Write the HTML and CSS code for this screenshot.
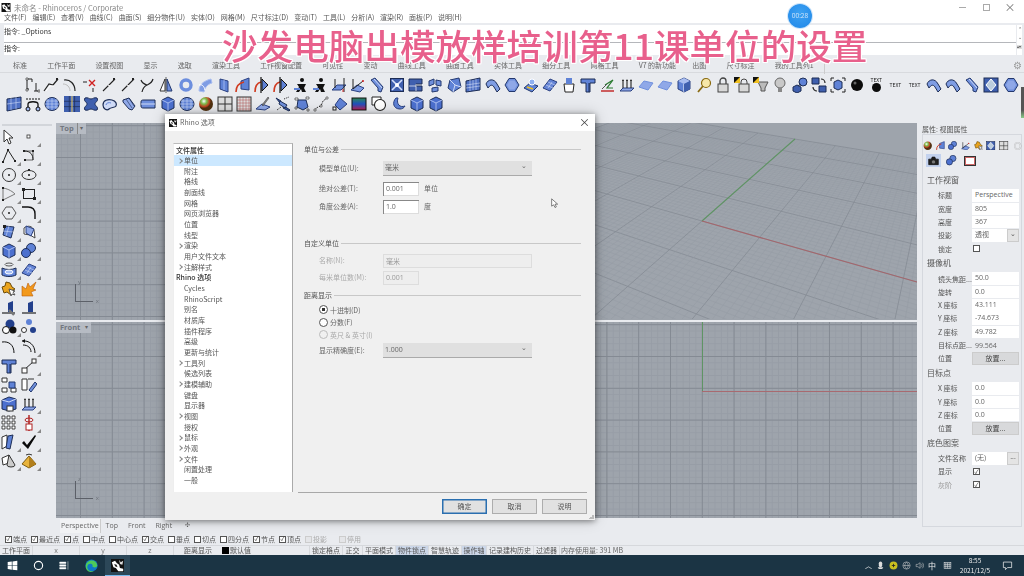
FILE: index.html
```
<!DOCTYPE html>
<html lang="zh-CN">
<head>
<meta charset="utf-8">
<title>Rhino</title>
<link rel="stylesheet" href="styles.css">
</head>
<body>
<svg class="defs" width="0" height="0">
<defs>
<symbol id="rhino" viewBox="0 0 16 16"><rect width="16" height="16" fill="#111"/><path d="M1 4l4-2 2 3 3 2 1 4 4 1v3H9L6 11 3 10z" fill="#fff"/><path d="M10 1l2 3 3-2-1 5-3-1z" fill="#ddd"/><path d="M4 6l3 1 1 3-3-1z" fill="#222"/></symbol>
<symbol id="crvT" viewBox="0 0 16 16"><path d="M3 2h5v3M3 2v10h2M10 14h5M12 6v8" fill="none" stroke="#222"/><path d="M2 1h2v2H2zM2 12h2v2H2zM14 13h2v2h-2z" fill="#fff" stroke="#222" stroke-width=".6"/></symbol>
<symbol id="blend" viewBox="0 0 16 16"><path d="M1 14l5-7 4 1 5-6" fill="none" stroke="#222" stroke-width="1.2"/><path d="M3 14l4-5 4 0" fill="none" stroke="#fff"/><rect x="13" y="1" width="2" height="2" fill="#222"/></symbol>
<symbol id="arc" viewBox="0 0 16 16"><path d="M2 3c6-1 11 4 11 11" fill="none" stroke="#222" stroke-width="1.2"/><path d="M1 7c4 0 7 3 7 7" fill="none" stroke="#bbb"/></symbol>
<symbol id="redx" viewBox="0 0 16 16"><path d="M1 5h4M11 11v4" stroke="#222" fill="none"/><path d="M7 3l6 6M13 3l-6 6" stroke="#d02020" stroke-width="1.4"/></symbol>
<symbol id="ln" viewBox="0 0 16 16"><path d="M2 14L14 2" stroke="#222" stroke-width="1.1"/><path d="M7 8l2 1" stroke="#fff"/><path d="M12 1h2v2h-2z" fill="#222"/></symbol>
<symbol id="ybr" viewBox="0 0 16 16"><path d="M3 15c1-5 3-6 5-7s5-2 6-6M2 3c1 3 3 4 6 5" fill="none" stroke="#222" stroke-width="1.2"/></symbol>
<symbol id="mir" viewBox="0 0 16 16"><path d="M7 2L2 14h5z" fill="#fff" stroke="#333"/><path d="M9 2l5 12H9z" fill="#6f8fdc" stroke="#23386e"/><path d="M8 0v16" stroke="#222" stroke-width=".7"/></symbol>
<symbol id="ring" viewBox="0 0 16 16"><circle cx="8" cy="8" r="5" fill="none" stroke="#6c8ede" stroke-width="3.4"/></symbol>
<symbol id="bcrv" viewBox="0 0 16 16"><path d="M2 14c0-6 4-10 12-12l1 4c-4 1-7 4-8 9z" fill="#7f9de4" stroke="#a9bdf0"/><path d="M2 8c3-1 5 1 6 5" fill="none" stroke="#fff"/></symbol>
<symbol id="plv" viewBox="0 0 16 16"><path d="M4 2l8 2v11l-8-3z" fill="#5f82d6" stroke="#2a4080"/><path d="M8 3v10" stroke="#9fb5ee"/></symbol>
<symbol id="rb" viewBox="0 0 16 16"><path d="M6 4l8-3v12l-8-1z" fill="#5f82d6" stroke="#2a4080"/><path d="M1 15c0-6 3-9 8-10" fill="none" stroke="#d03b20" stroke-width="1.6"/></symbol>
<symbol id="rbk" viewBox="0 0 16 16"><path d="M8 2l6 6-6 6z" fill="#5f82d6" stroke="#111"/><path d="M1 15c0-6 2-9 6-10" fill="none" stroke="#d03b20" stroke-width="1.6"/><path d="M7 0v16" stroke="#111" stroke-width="1.2"/></symbol>
<symbol id="per" viewBox="0 0 16 16"><circle cx="9" cy="3" r="2" fill="#111"/><path d="M4 7h9l-2 4 2 4H9l-1-3-2 3H3l3-5z" fill="#111"/><path d="M1 12h6" stroke="#5f82d6" stroke-width="2"/></symbol>
<symbol id="cam" viewBox="0 0 16 16"><path d="M1 6h14v8H1zM5 6l1-3h4l1 3" fill="#222" stroke="#111"/><circle cx="8" cy="10" r="2.500" fill="#777"/></symbol>
<symbol id="pld" viewBox="0 0 16 16"><path d="M1 13l5-5h9l-5 5z" fill="#6f8fdc" stroke="#2a4080"/><path d="M4 2v9M13 1v14" stroke="#222"/><path d="M12 12v3" stroke="#d02020"/></symbol>
<symbol id="pll" viewBox="0 0 16 16"><path d="M1 13l6-5 7 3-4 4z" fill="#7f9de4" stroke="#2a4080"/><path d="M3 2v10l10-8" fill="none" stroke="#222"/><circle cx="13" cy="4" r="1" fill="#d02020"/></symbol>
<symbol id="strip" viewBox="0 0 16 16"><path d="M2 3l4-2 8 9-2 5-3-1 0-3z" fill="#6f8fdc" stroke="#23386e"/><path d="M5 2l8 9" stroke="#cfdaf6"/></symbol>
<symbol id="boxx" viewBox="0 0 16 16"><rect x="1.500" y="1.500" width="13" height="13" fill="#3f5fae" stroke="#1d2d55"/><path d="M3 3l10 10M13 3L3 13" stroke="#d6e0fa" stroke-width="1.6"/><circle cx="8" cy="8" r="2" fill="#fff"/></symbol>
<symbol id="stk" viewBox="0 0 16 16"><path d="M1 2h13v5H8v2h6v5H1z" fill="#3f5fae" stroke="#1d2d55"/><path d="M8 7v7M1 9h7" stroke="#fff" stroke-width=".7"/></symbol>
<symbol id="brk" viewBox="0 0 16 16"><path d="M2 4l5-2v5l-5 2zM9 3l5 1v5l-5-1zM5 11l6-1v4l-6 1z" fill="#6f8fdc" stroke="#23386e"/></symbol>
<symbol id="cbh" viewBox="0 0 16 16"><path d="M4 3l9-2 2 9-8 5-5-4z" fill="#5f82d6" stroke="#23386e"/><path d="M4 3l5 5-2 7M9 8l6 2" stroke="#cfdaf6" fill="none"/></symbol>
<symbol id="grd" viewBox="0 0 16 16"><path d="M1 4l14-3v12L1 15z" fill="#4f70c4" stroke="#1d2d55"/><path d="M5 3v11M8 3v10M11 2v11M1 8l14-2M1 11l14-2" stroke="#cfdaf6" stroke-width=".6"/></symbol>
<symbol id="band" viewBox="0 0 16 16"><path d="M1 7c2-5 8-6 11 0l3 5-3 3-3-5C7 7 5 8 3 11z" fill="#7f9de4" stroke="#1d2d55"/></symbol>
<symbol id="hex" viewBox="0 0 16 16"><path d="M5 1.500h6L15 8l-4 6.500H5L1 8z" fill="#6f8fdc" stroke="#23386e"/><path d="M5.500 3.500h5L13 8l-2.500 4.500h-5L3 8z" fill="#8fa8e8"/></symbol>
<symbol id="gbox" viewBox="0 0 16 16"><rect x="1" y="1" width="14" height="14" fill="#3f5fae" stroke="#1d2d55"/><path d="M8 2l5 6-5 6-5-6z" fill="#bcd" stroke="#fff"/></symbol>
<symbol id="sdir" viewBox="0 0 16 16"><path d="M1 11l6-5 8 3-6 6z" fill="#5f82d6" stroke="#23386e"/><circle cx="9" cy="5" r="3" fill="#8fb0f0" stroke="#fff"/><path d="M4 10l6 2" stroke="#f0c020" stroke-width="1.6"/></symbol>
<symbol id="plt" viewBox="0 0 16 16"><path d="M1 11L8 2l7 3-7 9z" fill="#6484d6" stroke="#2a4080"/><path d="M4 8l7 3M6 5l7 3M6 11l4-6" stroke="#cfdaf6" stroke-width=".6"/></symbol>
<symbol id="buck" viewBox="0 0 16 16"><path d="M3 7h10l-1 8H4z" fill="#fff" stroke="#222"/><rect x="5" y="1" width="6" height="6" fill="#5f82d6"/></symbol>
<symbol id="tee" viewBox="0 0 16 16"><path d="M1 2h14v4h-5v9H6V6H1z" fill="#5f82d6" stroke="#1d2d55"/><path d="M9 6v9" stroke="#1d2d55"/></symbol>
<symbol id="zpl" viewBox="0 0 16 16"><path d="M5 8l8-5-6 8h6" fill="none" stroke="#2a7a30" stroke-width="1.2"/><path d="M1 14h13" stroke="#c02020" stroke-width="1.4"/><path d="M2 12l5-5" stroke="#555"/></symbol>
<symbol id="arr" viewBox="0 0 16 16"><path d="M1 14l3-3h11l-3 3z" fill="#8fa8e8" stroke="#2a4080"/><path d="M4 11V3M8 11V3M12 11V3" stroke="#222" stroke-width="1.100"/><path d="M3 4l1-2 1 2M7 4l1-2 1 2M11 4l1-2 1 2" fill="#222"/></symbol>
<symbol id="flat" viewBox="0 0 16 16"><path d="M1 10l5-6 9 2-5 7z" fill="#8fa8e8" stroke="#6f8fdc"/></symbol>
<symbol id="cube" viewBox="0 0 16 16"><path d="M2 4l6-3 6 3v8l-6 3-6-3z" fill="#5f82d6" stroke="#2a4080"/><path d="M2 4l6 3 6-3-6-3z" fill="#a9bdf0"/><path d="M8 7v8" stroke="#fff"/><path d="M8 7l6-3v8l-6 3z" fill="#3f5fae"/></symbol>
<symbol id="mag" viewBox="0 0 16 16"><circle cx="10" cy="6" r="4.500" fill="#f7e7a8" stroke="#8a6a10" stroke-width="1.200"/><path d="M7 9l-5 6" stroke="#8a6a10" stroke-width="1.800"/></symbol>
<symbol id="lock" viewBox="0 0 16 16"><path d="M5 7V4a3 3 0 016 0v3" fill="none" stroke="#444" stroke-width="1.300"/><rect x="3" y="7" width="10" height="8" fill="#d8d8d8" stroke="#444"/></symbol>
<symbol id="lockc" viewBox="0 0 16 16"><path d="M7 7V5a3 3 0 016 0v2" fill="none" stroke="#444"/><rect x="5" y="7" width="10" height="8" fill="#d8d8d8" stroke="#444"/><path d="M0 0h6v6H0z" fill="#111"/><path d="M0 6l6-6v6z" fill="#f0c020"/></symbol>
<symbol id="bulbc" viewBox="0 0 16 16"><path d="M5 5h10l-3 6v3H8v-3z" fill="#bbb" stroke="#555"/><path d="M0 0h6v6H0z" fill="#111"/><path d="M0 6l6-6v6z" fill="#f0c020"/></symbol>
<symbol id="bulb" viewBox="0 0 16 16"><circle cx="8" cy="6" r="5" fill="#c8c8c8" stroke="#666"/><rect x="6" y="11" width="4" height="4" fill="#888"/></symbol>
<symbol id="spb" viewBox="0 0 16 16"><circle cx="11" cy="5" r="4" fill="#5f82d6" stroke="#1d2d55"/><path d="M1 10l4-2 4 2v4l-4 2-4-2z" fill="#3f5fae" stroke="#1d2d55"/><path d="M6 9l3-2" stroke="#1d2d55"/></symbol>
<symbol id="cbs" viewBox="0 0 16 16"><path d="M1 1h7v6H1zM8 9h7v6H8z" fill="#3f5fae" stroke="#1d2d55"/><path d="M10 2a4 4 0 014 4M6 14a4 4 0 01-4-4" fill="none" stroke="#222" stroke-width="1.200"/></symbol>
<symbol id="cbd" viewBox="0 0 16 16"><path d="M4 5l4-2 4 2v6l-4 2-4-2z" fill="#5f82d6" stroke="#1d2d55"/><path d="M1 1h3M12 1h3M1 15h3M12 15h3M1 1v3M15 1v3M1 12v3M15 12v3" stroke="#222"/></symbol>
<symbol id="blk" viewBox="0 0 16 16"><circle cx="8" cy="8" r="6" fill="#0c0c0c"/><circle cx="6" cy="6" r="1.500" fill="#666"/></symbol>
<symbol id="sel" viewBox="0 0 16 16"><path d="M3 1v12l3-3 2 5 2-1-2-5h4z" fill="#fff" stroke="#333"/></symbol>
<symbol id="pt" viewBox="0 0 16 16"><rect x="6" y="6" width="3" height="3" fill="#fff" stroke="#333" stroke-width=".8"/></symbol>
<symbol id="pln" viewBox="0 0 16 16"><path d="M2 14L7 2l7 11" fill="none" stroke="#222"/><path d="M1 13h2v2H1zM6 1h2v2H6zM13 12h2v2h-2z" fill="#222"/></symbol>
<symbol id="ccp" viewBox="0 0 16 16"><path d="M3 3h9v9H4" fill="none" stroke="#444" stroke-width=".8"/><path d="M3 3c7 0 9 4 9 9" fill="none" stroke="#222"/><path d="M2 2h2v2H2zM11 2h2v2h-2zM3 11h2v2H3z" fill="#222"/></symbol>
<symbol id="cir" viewBox="0 0 16 16"><circle cx="8" cy="8" r="6.500" fill="none" stroke="#333"/><circle cx="8" cy="8" r="1" fill="#222"/></symbol>
<symbol id="ell" viewBox="0 0 16 16"><ellipse cx="8" cy="8" rx="7" ry="4.500" fill="none" stroke="#333"/><circle cx="8" cy="8" r="1" fill="#222"/><path d="M7 2h2v2H7z" fill="#222"/></symbol>
<symbol id="tri" viewBox="0 0 16 16"><path d="M2 2c6 1 10 4 12 6L2 14z" fill="none" stroke="#777"/><path d="M1 1h2v2H1zM1 13h2v2H1z" fill="#222"/></symbol>
<symbol id="rec" viewBox="0 0 16 16"><rect x="2.500" y="3.500" width="11" height="9" fill="none" stroke="#222"/><path d="M1 2h3v3H1zM12 11h3v3h-3z" fill="#222"/></symbol>
<symbol id="hxc" viewBox="0 0 16 16"><path d="M5 2h6l4 6-4 6H5L1 8z" fill="none" stroke="#555"/><circle cx="8" cy="8" r="1" fill="#222"/></symbol>
<symbol id="fil" viewBox="0 0 16 16"><path d="M1 2h6c5 0 7 3 7 7v5" fill="none" stroke="#111" stroke-width="1.400"/></symbol>
<symbol id="srf" viewBox="0 0 16 16"><path d="M4 2l9 1-3 11-8-3z" fill="#5f82d6" stroke="#1d2d55"/><path d="M8 2l-3 10M2 7l10 1" stroke="#cfdaf6" stroke-width=".6"/><path d="M2 1h3v3H2z" fill="#222"/></symbol>
<symbol id="pat" viewBox="0 0 16 16"><path d="M3 4c4-3 8-2 10 2l1 8-5-3-6-1z" fill="#fff" stroke="#444"/><path d="M5 2l8 3-3 7-5-3z" fill="#8fa8e8" stroke="#2a4080"/></symbol>
<symbol id="cb2" viewBox="0 0 16 16"><path d="M2 4l6-3 6 3v8l-6 3-6-3z" fill="#4c70cf" stroke="#1d2d55"/><path d="M2 4l6 3 6-3" fill="none" stroke="#a9bdf0"/><path d="M8 7v8" stroke="#a9bdf0"/></symbol>
<symbol id="sph2" viewBox="0 0 16 16"><circle cx="10" cy="5" r="4.500" fill="#5f82d6" stroke="#1d2d55"/><circle cx="5" cy="10" r="4.500" fill="#4c70cf" stroke="#1d2d55"/></symbol>
<symbol id="cyl" viewBox="0 0 16 16"><ellipse cx="8" cy="2.500" rx="4" ry="1.500" fill="none" stroke="#555"/><path d="M1 6c4 2 10 2 14 0v7c-4 2-10 2-14 0z" fill="#5f82d6" stroke="#1d2d55"/><ellipse cx="8" cy="10" rx="4" ry="2" fill="#a9c0f4" stroke="#fff"/></symbol>
<symbol id="star" viewBox="0 0 16 16"><path d="M1 6l3-1 1-4 4 1 2 4 3 2-4 2v4l-4-3-3 1z" fill="#eaa41e" stroke="#6b4a08"/><path d="M8 8l2 7 1-2 3 1-2-3 2-1z" fill="#fff" stroke="#555"/></symbol>
<symbol id="exp" viewBox="0 0 16 16"><path d="M1 15V5l4 3 2-6 2 4 6-5-3 7 3 1-5 2 2 4z" fill="#f2991c" stroke="#b85a08" stroke-width=".6"/></symbol>
<symbol id="trm" viewBox="0 0 16 16"><path d="M1 13h13" stroke="#222" stroke-width="1.200"/><path d="M7 12V3l5-2v11z" fill="#23408c"/><path d="M8 10l5 5" stroke="#777" stroke-width="2.400"/></symbol>
<symbol id="trm2" viewBox="0 0 16 16"><path d="M1 13h14" stroke="#222" stroke-width="1.200"/><path d="M7 12V3l5-2v11z" fill="#23408c"/></symbol>
<symbol id="dk3" viewBox="0 0 16 16"><circle cx="9" cy="5" r="4.500" fill="#23408c"/><circle cx="5" cy="11" r="3.500" fill="#fff" stroke="#111"/><circle cx="12" cy="11" r="3.500" fill="#111"/></symbol>
<symbol id="dots" viewBox="0 0 16 16"><circle cx="8" cy="3" r="3" fill="#5f82d6"/><circle cx="3" cy="11" r="2.500" fill="#fff" stroke="#333"/><circle cx="12" cy="11" r="3" fill="#23408c"/></symbol>
<symbol id="arc2" viewBox="0 0 16 16"><path d="M1 3c7-1 12 3 12 11" fill="none" stroke="#111"/></symbol>
<symbol id="arc3" viewBox="0 0 16 16"><path d="M1 2c7-1 13 4 13 12M2 6c5 0 8 3 8 7" fill="none" stroke="#111"/><path d="M1 2l3-2v4z" fill="#111"/></symbol>
<symbol id="pq" viewBox="0 0 16 16"><path d="M3 12l10-9" stroke="#222"/><rect x="1" y="10" width="5" height="5" fill="#fff" stroke="#333"/><rect x="11" y="1" width="4" height="4" fill="#fff" stroke="#333"/></symbol>
<symbol id="sqs" viewBox="0 0 16 16"><path d="M1 1h5v4H1zM1 11h5v4H1zM10 11h5v4h-5z" fill="#fff" stroke="#333"/><path d="M8 5h6v6H8z" fill="#5f82d6" stroke="#23386e"/></symbol>
<symbol id="flip" viewBox="0 0 16 16"><path d="M1 2h5v11H1z" fill="#fff" stroke="#333"/><path d="M8 13l6-8 2 2-6 8z" fill="#6f8fdc" stroke="#23386e"/><path d="M7 2h6" stroke="#333"/></symbol>
<symbol id="bxw" viewBox="0 0 16 16"><path d="M1 4l7-3 7 2v10l-7 2-7-2z" fill="#4c70cf" stroke="#1d2d55"/><path d="M1 4l7 2 7-3" fill="none" stroke="#cfdaf6"/><rect x="6" y="10" width="6" height="5" fill="#fff" stroke="#333"/></symbol>
<symbol id="dgrid" viewBox="0 0 16 16"><path d="M1 1h3v3H1zM6 1h3v3H6zM11 1h3v3h-3zM1 6h3v3H1zM6 6h3v3H6zM11 6h3v3h-3zM1 11h3v3H1zM6 11h3v3H6zM11 11h3v3h-3z" fill="#fff" stroke="#222" stroke-width=".8"/></symbol>
<symbol id="slc" viewBox="0 0 16 16"><path d="M8 0v16" stroke="#b02020" stroke-width="1.400"/><ellipse cx="8" cy="5" rx="4" ry="2" fill="none" stroke="#b02020"/><rect x="5" y="9" width="6" height="6" fill="#fff" stroke="#b02020"/></symbol>
<symbol id="bks" viewBox="0 0 16 16"><path d="M1 3l5-2v11l-5 3z" fill="#fff" stroke="#333"/><path d="M7 2l5-1-3 14-4-1z" fill="#5f82d6" stroke="#1d2d55"/></symbol>
<symbol id="chk" viewBox="0 0 16 16"><path d="M1 9l2-2 3 4 8-10 1 1-8 13z" fill="#0a0a0a"/></symbol>
<symbol id="cone" viewBox="0 0 16 16"><path d="M1 5l7-3v8l-6 2z" fill="#fff" stroke="#333"/><path d="M8 2l6 10a4 2 0 01-8 0z" fill="#ccc" stroke="#333"/></symbol>
<symbol id="pyr" viewBox="0 0 16 16"><path d="M8 3l7 8-7 4-7-4z" fill="#e8b33c" stroke="#7a5a10"/><path d="M8 3v12l7-4z" fill="#b27f1c"/><path d="M5 2a4 2 0 016 0" fill="none" stroke="#333"/></symbol>
<symbol id="mesh" viewBox="0 0 16 16"><path d="M1 3l14-2v11L1 15z" fill="#4f70c4" stroke="#1d2d55"/><path d="M1 8l14-2M5 2v12M10 1v12" stroke="#cfdaf6" stroke-width=".6"/></symbol>
<symbol id="tube" viewBox="0 0 16 16"><path d="M3 13V8c0-3 10-3 10 0v5" fill="none" stroke="#111" stroke-width="1.300"/><path d="M1 3h14" stroke="#111" stroke-dasharray="2 1"/><ellipse cx="3" cy="13" rx="2" ry="2" fill="#9fb5ee" stroke="#111"/><ellipse cx="13" cy="13" rx="2" ry="2" fill="#9fb5ee" stroke="#111"/></symbol>
<symbol id="sgrd" viewBox="0 0 16 16"><ellipse cx="8" cy="8" rx="7" ry="6.500" fill="#5f82d6" stroke="#1d2d55"/><path d="M8 2v12M4 3v10M12 3v10M1 8h14M2 5h12M2 11h12" stroke="#cfdaf6" stroke-width=".6"/></symbol>
<symbol id="yg" viewBox="0 0 16 16"><rect x="0" y="0" width="16" height="16" fill="#3f5fae"/><path d="M0 5.300h16M0 10.600h16M5.300 0v16M10.600 0v16" stroke="#1d2d55" stroke-width=".7"/><path d="M8 0v16" stroke="#f0d060"/></symbol>
<symbol id="bone" viewBox="0 0 16 16"><path d="M2 2c3-1 4 1 6 1s3-2 6-1c2 3-2 4-2 6s4 3 2 6c-3 1-4-1-6-1s-3 2-6 1c-2-3 2-4 2-6S0 5 2 2z" fill="#3f5fae" stroke="#1d2d55"/></symbol>
<symbol id="blob" viewBox="0 0 16 16"><path d="M1 9c0-5 5-6 9-5s5 4 4 6-5 1-7 3-6 0-6-4z" fill="#cfdaf6" stroke="#1d2d55" stroke-width="1.200"/><path d="M4 9c0-2 3-3 5-2" fill="none" stroke="#5f82d6"/></symbol>
<symbol id="rnd" viewBox="0 0 16 16"><path d="M2 4l6-2 6 8-3 4-3-1-6-7z" fill="#8fa8e8" stroke="#1d2d55"/><path d="M5 3l6 9M8 2l5 8" stroke="#1d2d55" stroke-width=".6"/></symbol>
<symbol id="cap" viewBox="0 0 16 16"><path d="M1 6c0-2 1-2 3-2h11v8H4c-2 0-3 0-3-2z" fill="#6f8fdc" stroke="#1d2d55"/><path d="M1 8h14" stroke="#cfdaf6"/></symbol>
<symbol id="ball" viewBox="0 0 16 16"><defs><radialGradient id="bg" cx=".35" cy=".3"><stop offset="0" stop-color="#fff"/><stop offset=".4" stop-color="#7fc050"/><stop offset=".8" stop-color="#c04020"/><stop offset="1" stop-color="#503010"/></radialGradient></defs><circle cx="8" cy="8" r="7" fill="url(#bg)"/></symbol>
<symbol id="q4" viewBox="0 0 16 16"><rect x="1" y="1" width="14" height="14" fill="#ddd" stroke="#333"/><path d="M8 1v14M1 8h14" stroke="#333"/></symbol>
<symbol id="q16" viewBox="0 0 16 16"><rect x="1" y="1" width="14" height="14" fill="#ddd" stroke="#333"/><path d="M4 1v14M7 1v14M10 1v14M13 1v14M1 4h14M1 7h14M1 10h14M1 13h14" stroke="#a33" stroke-width=".4"/></symbol>
<symbol id="knf" viewBox="0 0 16 16"><path d="M1 13l6-5 8 3-5 3z" fill="#8fa8e8" stroke="#2a4080"/><path d="M7 9l6-8 1 1-6 8z" fill="#888" stroke="#333" stroke-width=".5"/></symbol>
<symbol id="sat" viewBox="0 0 16 16"><path d="M1 2l5 3-1 2zM9 10l6 4-1 1-6-3z" fill="#3f5fae" stroke="#1d2d55"/><path d="M5 5l7 4-2 3-6-4z" fill="#6f8fdc" stroke="#1d2d55"/><path d="M9 3l5-2M2 14l4-3" stroke="#222" stroke-dasharray="1 1"/></symbol>
<symbol id="cag" viewBox="0 0 16 16"><path d="M4 4l8 0 2 7-5 3-6-3z" fill="#5f82d6" stroke="#1d2d55"/><path d="M1 2h3v2H1zM12 1h3v2h-3zM1 11h2v2H1zM13 13h2v2h-2z" fill="#fff" stroke="#222" stroke-width=".6"/></symbol>
<symbol id="spl" viewBox="0 0 16 16"><path d="M1 14l4-3 3-1 2-5 4-3" fill="none" stroke="#333" stroke-dasharray="2 1"/><path d="M1 13h2v2H1zM7 9h2v2H7zM13 1h2v2h-2z" fill="#fff" stroke="#333" stroke-width=".6"/></symbol>
<symbol id="dia" viewBox="0 0 16 16"><path d="M8 2l7 6-7 6-5-5z" fill="#5f82d6" stroke="#2a4080"/><rect x="1" y="11" width="3" height="3" fill="#fff" stroke="#222"/></symbol>
<symbol id="rbw" viewBox="0 0 16 16"><defs><linearGradient id="rg" x1="0" x2="0" y1="0" y2="1"><stop offset="0" stop-color="#2e8b57"/><stop offset=".5" stop-color="#2050c0"/><stop offset="1" stop-color="#c02050"/></linearGradient></defs><rect x="1" y="2" width="14" height="12" fill="url(#rg)" stroke="#111"/></symbol>
<symbol id="rc" viewBox="0 0 16 16"><path d="M1 1h9v8H1z" fill="#fff" stroke="#222"/><circle cx="9" cy="9" r="5.500" fill="#fff" stroke="#222" stroke-width="1.100"/></symbol>
<symbol id="moon" viewBox="0 0 16 16"><path d="M6 2c-4 4-3 11 4 11 2 0 4-1 5-3-5 2-9-2-7-8z" fill="#5f82d6" stroke="#2a4080"/></symbol>
</defs>
</svg>

<div class="app">
  <header class="titlebar">
    <svg class="logo"><use href="#rhino"/></svg>
    <span class="apptitle">未命名 - Rhinoceros / Corporate</span>
    <span class="winctl"><i class="wmin"></i><i class="wmax"></i><i class="wcls">×</i></span>
  </header>
  <nav class="menu">
    <span>文件(F)</span><span>编辑(E)</span><span>查看(V)</span><span>曲线(C)</span><span>曲面(S)</span><span>细分物件(U)</span><span>实体(O)</span><span>网格(M)</span><span>尺寸标注(D)</span><span>变动(T)</span><span>工具(L)</span><span>分析(A)</span><span>渲染(R)</span><span>面板(P)</span><span>说明(H)</span>
  </nav>
  <section class="cmd">
    <div class="cmdbox">
      <div class="cmdhist">指令: _Options</div>
      <div class="cmdline">指令:</div>
    </div>
    <div class="cmdscroll"><span>⌃</span><span>⌄</span><span class="cs2">▴▾</span></div>
  </section>
  <nav class="tabs">
    <span>标准</span><span>工作平面</span><span>设置视图</span><span>显示</span><span>选取</span><span>渲染工具</span><span>工作视窗配置</span><span>可见性</span><span>变动</span><span>曲线工具</span><span>曲面工具</span><span>实体工具</span><span>细分工具</span><span>网格工具</span><span class="v7">V7 的新功能</span><span>出图</span><span>尺寸标注</span><span class="mytab">我的工具列1</span>
    <span class="gear">⚙</span>
  </nav>
  <section class="tools">
    <div class="row r1">
      <svg><use href="#crvT"/></svg><svg><use href="#blend"/></svg><svg><use href="#arc"/></svg><svg><use href="#redx"/></svg><svg><use href="#ln"/></svg><svg><use href="#ln"/></svg><svg><use href="#ybr"/></svg><svg><use href="#mir"/></svg><svg><use href="#ring"/></svg><svg><use href="#bcrv"/></svg><svg><use href="#plv"/></svg><svg><use href="#rb"/></svg><svg><use href="#rbk"/></svg><svg><use href="#rbk"/></svg><svg><use href="#per"/></svg><svg><use href="#per"/></svg><svg><use href="#pld"/></svg><svg><use href="#pll"/></svg><svg><use href="#strip"/></svg><svg><use href="#boxx"/></svg><svg><use href="#stk"/></svg><svg><use href="#brk"/></svg><svg><use href="#cbh"/></svg><svg><use href="#grd"/></svg><svg><use href="#band"/></svg><svg><use href="#hex"/></svg><svg><use href="#sdir"/></svg><svg><use href="#plt"/></svg><svg><use href="#buck"/></svg><svg><use href="#tee"/></svg><svg><use href="#zpl"/></svg><svg><use href="#arr"/></svg><svg><use href="#flat"/></svg><svg><use href="#flat"/></svg><svg><use href="#cube"/></svg><svg><use href="#mag"/></svg><svg><use href="#lock"/></svg><svg><use href="#lockc"/></svg><svg><use href="#bulbc"/></svg><svg><use href="#bulb"/></svg><svg><use href="#spb"/></svg><svg><use href="#cbs"/></svg><svg><use href="#cbd"/></svg><svg><use href="#blk"/></svg>
      <b class="txi">TEXT<i></i></b><b class="txt">TEXT</b><b class="txt">TEXT</b>
      <svg><use href="#band"/></svg><svg><use href="#band"/></svg><svg><use href="#strip"/></svg><svg><use href="#gbox"/></svg><svg><use href="#hex"/></svg>
    </div>
    <div class="row r2">
      <svg><use href="#mesh"/></svg><svg><use href="#tube"/></svg><svg><use href="#sgrd"/></svg><svg><use href="#yg"/></svg><svg><use href="#bone"/></svg><svg><use href="#blob"/></svg><svg><use href="#rnd"/></svg><svg><use href="#cap"/></svg><svg><use href="#cb2"/></svg><svg><use href="#sgrd"/></svg><svg><use href="#ball"/></svg><svg><use href="#q4"/></svg><svg><use href="#q16"/></svg><svg><use href="#knf"/></svg><svg><use href="#sat"/></svg><svg><use href="#cag"/></svg><svg><use href="#spl"/></svg><svg><use href="#dia"/></svg><svg><use href="#rbw"/></svg><svg><use href="#rc"/></svg><svg><use href="#moon"/></svg><svg><use href="#cb2"/></svg><svg><use href="#cb2"/></svg>
    </div>
    <i class="tscroll"></i>
  </section>

  <main class="work">
    <aside class="lbar">
      <i class="lsep"></i>
      <div class="lgrid">
        <span class="ic"><svg><use href="#sel"/></svg></span><span class="ic c"><svg><use href="#pt"/></svg></span>
        <span class="ic c"><svg><use href="#pln"/></svg></span><span class="ic c"><svg><use href="#ccp"/></svg></span>
        <span class="ic c"><svg><use href="#cir"/></svg></span><span class="ic c"><svg><use href="#ell"/></svg></span>
        <span class="ic c"><svg><use href="#tri"/></svg></span><span class="ic c"><svg><use href="#rec"/></svg></span>
        <span class="ic c"><svg><use href="#hxc"/></svg></span><span class="ic c"><svg><use href="#fil"/></svg></span>
        <span class="ic c"><svg><use href="#srf"/></svg></span><span class="ic c"><svg><use href="#pat"/></svg></span>
        <span class="ic c"><svg><use href="#cb2"/></svg></span><span class="ic c"><svg><use href="#sph2"/></svg></span>
        <span class="ic c"><svg><use href="#cyl"/></svg></span><span class="ic c"><svg><use href="#plt"/></svg></span>
        <span class="ic"><svg><use href="#star"/></svg></span><span class="ic"><svg><use href="#exp"/></svg></span>
        <span class="ic"><svg><use href="#trm"/></svg></span><span class="ic"><svg><use href="#trm2"/></svg></span>
        <span class="ic c"><svg><use href="#dk3"/></svg></span><span class="ic"><svg><use href="#dots"/></svg></span>
        <span class="ic"><svg><use href="#arc2"/></svg></span><span class="ic c"><svg><use href="#arc3"/></svg></span>
        <span class="ic"><svg><use href="#tee"/></svg></span><span class="ic c"><svg><use href="#pq"/></svg></span>
        <span class="ic"><svg><use href="#sqs"/></svg></span><span class="ic"><svg><use href="#flip"/></svg></span>
        <span class="ic"><svg><use href="#bxw"/></svg></span><span class="ic c"><svg><use href="#arr"/></svg></span>
        <span class="ic"><svg><use href="#dgrid"/></svg></span><span class="ic c"><svg><use href="#slc"/></svg></span>
        <span class="ic c"><svg><use href="#bks"/></svg></span><span class="ic c"><svg><use href="#chk"/></svg></span>
        <span class="ic c"><svg><use href="#cone"/></svg></span><span class="ic c"><svg><use href="#pyr"/></svg></span>
      </div>
    </aside>

    <section class="center">
      <div class="vps">
        <div class="vp vp-top">
          <span class="vplabel">Top <em>▾</em></span>
          <span class="axis"><i class="ay">y</i><i class="ax">x</i></span>
        </div>
        <div class="vp vp-persp"><svg id="persp" viewBox="0 0 430 196" preserveAspectRatio="none"></svg></div>
        <div class="vp vp-front">
          <span class="vplabel">Front <em>▾</em></span>
          <span class="axis"><i class="ay">z</i><i class="ax">x</i></span>
        </div>
        <div class="vp vp-right"><i class="gline"></i><i class="rline"></i></div>
      </div>
      <div class="vptabs">
        <span class="vpt on">Perspective</span><span class="vpt">Top</span><span class="vpt">Front</span><span class="vpt">Right</span><span class="vpt plus">✣</span>
      </div>
    </section>

    <aside class="props">
      <div class="ptitle">属性: 视图属性</div>
      <div class="pbox">
        <div class="ptabs">
          <svg><use href="#ball"/></svg><svg><use href="#rb"/></svg><svg><use href="#sph2"/></svg><svg><use href="#pll"/></svg><svg><use href="#star"/></svg><svg><use href="#gbox"/></svg><svg class="mon"><use href="#q4"/></svg><em>◎</em>
        </div>
        <div class="psub">
          <span class="on"><svg><use href="#cam"/></svg></span><span><svg><use href="#sph2"/></svg></span><span><i class="pframe"></i></span>
        </div>
        <h4>工作视窗</h4>
        <div class="pr"><label>标题</label><span class="v">Perspective</span></div>
        <div class="pr"><label>宽度</label><span class="v">805</span></div>
        <div class="pr"><label>高度</label><span class="v">367</span></div>
        <div class="pr"><label>投影</label><span class="v sel">透视<b>⌄</b></span></div>
        <div class="pr"><label>锁定</label><span class="n"><i class="ck"></i></span></div>
        <h4>摄像机</h4>
        <div class="pr"><label>镜头焦距...</label><span class="v">50.0</span></div>
        <div class="pr"><label>旋转</label><span class="v">0.0</span></div>
        <div class="pr"><label>X 座标</label><span class="v">43.111</span></div>
        <div class="pr"><label>Y 座标</label><span class="v">-74.673</span></div>
        <div class="pr"><label>Z 座标</label><span class="v">49.782</span></div>
        <div class="pr"><label>目标点距...</label><span class="n tv">99.564</span></div>
        <div class="pr"><label>位置</label><span class="btn">放置...</span></div>
        <h4>目标点</h4>
        <div class="pr"><label>X 座标</label><span class="v">0.0</span></div>
        <div class="pr"><label>Y 座标</label><span class="v">0.0</span></div>
        <div class="pr"><label>Z 座标</label><span class="v">0.0</span></div>
        <div class="pr"><label>位置</label><span class="btn">放置...</span></div>
        <h4>底色图案</h4>
        <div class="pr"><label>文件名称</label><span class="v sel">(无)<b>...</b></span></div>
        <div class="pr"><label>显示</label><span class="n"><i class="ck on">✓</i></span></div>
        <div class="pr"><label class="dim">灰阶</label><span class="n"><i class="ck on">✓</i></span></div>
      </div>
    </aside>
  </main>

  <section class="osnap">
    <label><i class="ck on">✓</i>端点</label><label><i class="ck on">✓</i>最近点</label><label><i class="ck on">✓</i>点</label><label><i class="ck"></i>中点</label><label><i class="ck"></i>中心点</label><label><i class="ck on">✓</i>交点</label><label><i class="ck"></i>垂点</label><label><i class="ck"></i>切点</label><label><i class="ck"></i>四分点</label><label><i class="ck on">✓</i>节点</label><label><i class="ck on">✓</i>顶点</label><label class="off"><i class="ck"></i>投影</label><label class="off s"><i class="ck"></i>停用</label>
  </section>
  <footer class="status">
    <span class="s1">工作平面</span><span class="s2">x</span><span class="s2">y</span><span class="s2">z</span><span class="s3">距离显示</span><span class="s4"><i></i>默认值</span>
    <span class="s5">锁定格点</span><span class="s6">正交</span><span class="s5">平面模式</span><span class="s5 hi">物件锁点</span><span class="s5">智慧轨迹</span><span class="s7 hi">操作轴</span><span class="s8">记录建构历史</span><span class="s9">过滤器</span><span class="s10">内存使用量: 391 MB</span>
  </footer>
  <footer class="taskbar">
    <svg class="tb win" viewBox="0 0 16 16"><path d="M1 3l6-1v5.500H1zM8 2l7-1v6.500H8zM1 8.500h6V14l-6-1zM8 8.500h7V15l-7-1z" fill="#fff"/></svg>
    <svg class="tb sr" viewBox="0 0 16 16"><circle cx="8" cy="8" r="6" fill="none" stroke="#fff" stroke-width="1.600"/></svg>
    <svg class="tb tv" viewBox="0 0 16 16"><path d="M1 3h9v2H1zM1 7h9v2H1zM1 11h9v2H1zM13 2v12" fill="#fff" stroke="#fff" stroke-width=".7"/></svg>
    <svg class="tb ed" viewBox="0 0 16 16"><circle cx="8" cy="8" r="7.500" fill="#0f78c8"/><path d="M1 8c1-7 13-9 14 0 0 3-5 3-6 1 2-3-5-5-6 0-1 4 3 7 8 6-5 3-11-1-10-7z" fill="#4ecb5a"/></svg>
    <span class="tb active"><svg><use href="#rhino"/></svg></span>
    <div class="tray">
      <span class="tri1">︿</span>
      <svg viewBox="0 0 16 16"><rect x="5" y="1" width="6" height="10" rx="3" fill="#ddd"/><path d="M3 11h10l-2 3H5z" fill="#ddd"/></svg>
      <svg viewBox="0 0 16 16"><circle cx="8" cy="8" r="7" fill="#c8c020"/><path d="M5 8h6M8 5v6" stroke="#222" stroke-width="1.500"/></svg>
      <svg viewBox="0 0 16 16"><circle cx="8" cy="8" r="6.500" fill="none" stroke="#ccc"/><path d="M2 8h12M8 2c-4 4-4 8 0 12M8 2c4 4 4 8 0 12" fill="none" stroke="#ccc"/></svg>
      <svg viewBox="0 0 16 16"><path d="M2 6h3l4-3v10l-4-3H2z" fill="none" stroke="#ccc"/><path d="M11 5c2 2 2 4 0 6M13 3c3 3 3 7 0 10" fill="none" stroke="#ccc"/></svg>
      <span class="zh">中</span>
      <svg viewBox="0 0 16 16"><rect x="2" y="3" width="12" height="10" fill="none" stroke="#eee"/><path d="M5 3v10M8 3v10M11 3v10M2 6h12M2 9.500h12" stroke="#eee"/></svg>
      <span class="clock">8:55<br>2021/12/5</span>
      <svg class="note" viewBox="0 0 16 16"><path d="M2 3h12v8H8l-3 3v-3H2z" fill="none" stroke="#eee" stroke-width="1.100"/></svg>
    </div>
  </footer>

  <div class="overlay-title">沙发电脑出模放样培训第11课单位的设置</div>
  <div class="timer">00:28</div>

  <div class="dialog">
    <div class="dtitle"><svg><use href="#rhino"/></svg><span>Rhino 选项</span><em>×</em></div>
    <div class="dbody">
      <div class="tree">
        <div class="t h">文件属性</div>
        <div class="t sel a">单位</div>
        <div class="t">附注</div>
        <div class="t">格线</div>
        <div class="t">剖面线</div>
        <div class="t">网格</div>
        <div class="t">网页浏览器</div>
        <div class="t">位置</div>
        <div class="t">线型</div>
        <div class="t a">渲染</div>
        <div class="t">用户文件文本</div>
        <div class="t a">注解样式</div>
        <div class="t h">Rhino 选项</div>
        <div class="t">Cycles</div>
        <div class="t">RhinoScript</div>
        <div class="t">别名</div>
        <div class="t">材质库</div>
        <div class="t">插件程序</div>
        <div class="t">高级</div>
        <div class="t">更新与统计</div>
        <div class="t a">工具列</div>
        <div class="t">候选列表</div>
        <div class="t a">建模辅助</div>
        <div class="t">键盘</div>
        <div class="t">显示器</div>
        <div class="t a">视图</div>
        <div class="t">授权</div>
        <div class="t a">鼠标</div>
        <div class="t a">外观</div>
        <div class="t a">文件</div>
        <div class="t">闲置处理</div>
        <div class="t">一般</div>
      </div>
      <div class="pane">
        <div class="grp g1">单位与公差</div>
        <div class="f f-sel"><label>模型单位(U):</label><span class="select">毫米<b>⌄</b></span></div>
        <div class="f f-1"><label>绝对公差(T):</label><span class="inp">0.001</span><span class="u">单位</span></div>
        <div class="f f-2"><label>角度公差(A):</label><span class="inp">1.0</span><span class="u">度</span></div>
        <div class="grp g2">自定义单位</div>
        <div class="f f-3 dis"><label>名称(N):</label><span class="inp wide">毫米</span></div>
        <div class="f f-4 dis"><label>每米单位数(M):</label><span class="inp">0.001</span></div>
        <div class="grp g3">距离显示</div>
        <div class="radio on">十进制(D)</div>
        <div class="radio">分数(F)</div>
        <div class="radio dis">英尺 &amp; 英寸(I)</div>
        <div class="f f-5"><label>显示精确度(E):</label><span class="select">1.000<b>⌄</b></span></div>
      </div>
    </div>
    <div class="dfoot"><span class="dbtn def">确定</span><span class="dbtn">取消</span><span class="dbtn">说明</span></div>
    <i class="grip"></i>
    <svg class="cursor" viewBox="0 0 12 16"><path d="M1 1v11l3-2 2 4 2-1-2-4h4z" fill="#fff" stroke="#444"/></svg>
  </div>
</div>
<script src="grid.js"></script>
</body>
</html>
```
FILE: styles.css
```
*{box-sizing:border-box;margin:0;padding:0}
html,body{width:1024px;height:576px;overflow:hidden;background:#e9ebef}
body{font:7px/1.2 "Noto Sans CJK SC","Noto Sans",sans-serif;color:#444}
i,em{font-style:normal}
.defs{position:absolute}
.app{position:relative;width:1024px;height:576px;display:flex;flex-direction:column;filter:blur(.35px);overflow:hidden}

.titlebar{height:13px;background:#fff;display:flex;align-items:center;padding:1px 2px 0 1px;color:#888;flex:none}
.logo{width:10px;height:9px}
.apptitle{margin-left:3px;font-size:7.500px}
.winctl{margin-left:auto;display:flex;width:72px;align-items:center;color:#777}
.winctl i{width:24px;display:flex;justify-content:center}
.wmin::before{content:"";width:7px;height:1px;background:#aaa}
.wmax::before{content:"";width:5px;height:5px;border:1px solid #aaa}
.wcls{font-size:11px;line-height:8px}
.menu{height:10px;background:#fff;display:flex;gap:5.800px;padding-left:4px;line-height:9px;color:#555;flex:none}

.cmd{height:33px;padding:2px 2px 1px 4px;display:flex;flex:none;gap:1px}
.cmdbox{flex:1;background:#fff;display:flex;flex-direction:column}
.cmdhist{height:18px;padding-top:2px;border-bottom:1px solid #b5b7bb;color:#333}
.cmdline{padding-top:1px;color:#222}
.cmdscroll{width:5px;background:#fff;display:flex;flex-direction:column;align-items:center;font-size:5px;line-height:8px;color:#555}
.cs2{margin-top:4px;width:5px;line-height:3.500px;background:#ddd;font-size:4px}

.tabs{height:17px;display:flex;gap:20.200px;padding:3px 0 0 13px;align-items:center;border-bottom:1px solid #d8dade;position:relative;color:#666;flex:none}
.v7{margin-right:-4px}
.mytab{position:relative}
.mytab::after{content:"";position:absolute;left:-8px;right:-11px;top:-6px;bottom:-4px;border-right:1px solid #ccc}
.gear{position:absolute;right:2px;top:3px;font-size:10px;color:#999}

.tools{height:41px;position:relative;flex:none;padding-top:4px;display:flex;flex-direction:column;gap:3px}
.row{display:flex;gap:3.200px;height:16px}
.row svg{width:16px;height:16px;flex:none}
.r1{padding-left:24px}
.r2{padding-left:6px}
.txt,.txi{width:16px;height:16px;flex:none;font-size:5px;font-weight:400;text-align:center;line-height:15px;color:#222}
.txi{position:relative;line-height:6px}
.txi i{position:absolute;left:4px;top:6px;width:9px;height:9px;border-radius:50%;background:#0c0c0c}
.tscroll{position:absolute;right:0;top:14px;width:3px;height:31px;background:linear-gradient(#555 75%,#8c8 100%)}

.work{flex:none;height:419px;display:flex;min-height:0}
.lbar{width:56px;flex:none;padding:10px 2px 0;display:flex;flex-direction:column}
.lsep{height:2px;background:#d2d5da;margin-right:2px}
.lgrid{display:grid;grid-template-columns:20px 20px;grid-auto-rows:19.050px;margin:3px 0 0 -1px}
.ic{position:relative;display:block;width:16px;height:16px}
.ic svg{width:16px;height:16px;display:block}
.ic.c::after{content:"";position:absolute;right:-4px;bottom:-2px;border:2px solid transparent;border-right-color:#888;border-bottom-color:#888}

.center{width:861px;flex:none;padding-top:9px;display:flex;flex-direction:column}
.vps{height:395px;display:grid;grid-template-columns:431px 430px;grid-template-rows:197px 196px;gap:2px 0;background:#e9ebef}
.vp{position:relative;overflow:hidden;background-color:#9ea4ac}
.vp-top,.vp-front,.vp-right{
 background-image:
  linear-gradient(#848a93 1px,transparent 1px),
  linear-gradient(90deg,#848a93 1px,transparent 1px),
  linear-gradient(#979da6 1px,transparent 1px),
  linear-gradient(90deg,#979da6 1px,transparent 1px);
 background-size:31.800px 31.800px,31.800px 31.800px,6.360px 6.360px,6.360px 6.360px;
 background-position:0 34px,24px 0,0 34px,24px 0;
}
.vp-persp svg{display:block;width:430px;height:196px}
.vplabel{position:absolute;left:0;top:0;height:11px;padding:0 3px 0 4px;background:#b6bbc3;color:#727780;font:700 7.500px/11px "Open Sans",sans-serif;display:flex;gap:3px}
.vplabel em{color:#666;font-size:6px;font-weight:400;border-left:1px solid #888;padding-left:2px}
.vp-front .vplabel em{border:0}
.axis{position:absolute;left:19px;bottom:18px;width:18px;height:18px;border-left:1px solid #5c6068;border-bottom:1px solid #5c6068}
.vp-front .axis{bottom:19px}
.axis i{position:absolute;font:400 6px/6px "Open Sans",sans-serif;color:#6b7078}
.ay{left:2px;top:-5px}
.ax{right:-6px;bottom:-3px}
.gline{position:absolute;left:215px;top:0;width:1px;height:69px;background:#5f9464}
.rline{position:absolute;left:215px;top:69px;right:0;height:1px;background:#a86a70}
.vptabs{display:flex;height:16px;padding-left:4px;align-items:center;font:400 7px "Open Sans",sans-serif;color:#666}
.vpt{padding:0 5px;height:14px;line-height:13px}
.vpt.on{background:#f1f2f4;border-right:1px solid #ccc;padding:0 1px}
.vpt.plus{margin-left:3px;font-size:6px}

.props{flex:1;padding:10px 2px 0 5px;min-width:0;display:flex;flex-direction:column}
.ptitle{height:10px;line-height:10px;color:#555}
.pbox{height:393px;border:1px solid #d5d8de;padding:2px 0 0;display:flex;flex-direction:column}
.ptabs{display:flex;gap:3.200px;padding:2px 0 0;height:15px;align-items:center}
.ptabs svg{width:9.500px;height:9.500px;flex:none}
.ptabs em{color:#aaa;font-size:8px;margin-left:2px}
.psub{display:flex;gap:3px;padding:2px 0 0 3px;height:20.200px}
.psub span{width:15px;height:13px;display:flex;align-items:center;justify-content:center}
.psub span.on{background:#c3d2ee}
.psub svg{width:11px;height:11px}
.pframe{width:12px;height:10px;border:1px solid #333;background:#fff;box-shadow:inset 0 0 0 1px #c66}
.pbox h4{font-weight:400;height:16.700px;line-height:16.700px;padding-left:4px;color:#555;font-size:8px}
.pr{display:flex;height:13.300px;align-items:center;padding-right:2px}
.pr label{width:49px;padding-left:15px;white-space:nowrap;color:#555;overflow:hidden;flex:none}
.pr label.dim{color:#999}
.v{flex:1;height:12.500px;background:#fff;padding-left:3px;color:#666;font:400 7px/12.500px "Open Sans","Noto Sans CJK SC",sans-serif;position:relative;white-space:nowrap}
.v.sel b{position:absolute;right:0;top:0;width:12px;height:12.500px;background:#e4e4e4;border:1px solid #ccc;text-align:center;line-height:8px;font-weight:400;color:#555}
.n{padding-left:1px;display:flex;align-items:center}
.n.tv{padding-left:3px;font:400 7px "Open Sans",sans-serif;color:#666}
.btn{flex:1;height:12.500px;background:#d8d9db;border:1px solid #ccc;text-align:center;line-height:10.500px;color:#444}
.ck{display:inline-flex;align-items:center;justify-content:center;width:7px;height:7px;border:1px solid #555;background:#fff;font-size:6px;line-height:6px;color:#333;flex:none}

.osnap{height:12px;display:flex;gap:4px;padding:1px 0 0 5px;align-items:center;color:#555;flex:none}
.osnap label{display:flex;align-items:center;gap:1px}
.osnap .off{color:#aaa}
.osnap .off .ck{border-color:#ccc;background:#e4e5e8}
.osnap .s{margin-left:8px}
.status{height:10px;display:flex;border-top:1px solid #d6d8dc;color:#555;line-height:9px;flex:none}
.status>span{border-right:1px solid #d6d8dc;text-align:center;white-space:nowrap;flex:none}
.s1{width:33px}.s2{width:47px;color:#777;font-family:"Open Sans",sans-serif}.s3{width:48px;text-align:right!important;padding-right:10px;border:0!important}
.s4{width:88px;text-align:left!important;display:flex;align-items:center;gap:1px}
.s4 i{width:7px;height:7px;background:#000}
.s5{width:33px}.s6{width:20px}.s7{width:25px}.s8{width:47px}.s9{width:26px}.s10{border:0!important;padding-left:1px;color:#666}
.hi{background:#cbd6e8}

.taskbar{flex:none;height:21px;background:#1b3444;position:relative;color:#eee}
.tb{position:absolute;top:5px;width:11px;height:11px}
.win{left:7px}
.sr{left:33px}
.tv{left:59px}
.ed{left:85px;width:13px;height:13px;top:4px}
.active{left:105px;top:0;width:25px;height:21px;background:#2c4758;border-bottom:1px solid #76b9ed;display:flex;align-items:center;justify-content:center}
.active svg{width:13px;height:13px}
.tray{position:absolute;right:11.500px;top:0;height:21px;display:flex;align-items:center;gap:4px}
.tray svg{width:9px;height:9px}
.tri1{font-size:7px;line-height:7px}
.zh{font-size:8px;margin-right:2.500px}
.clock{width:42px;text-align:center;font-size:6.500px;line-height:9.500px;margin:0 1.500px 0 -1.500px}
.tray .note{width:11px;height:11px}

.overlay-title{position:absolute;left:222px;top:27px;font-size:35.600px;line-height:35px;font-weight:500;color:#e8608c;white-space:nowrap;
 text-shadow:1px 0 #fff,-1px 0 #fff,0 1px #fff,0 -1px #fff,1px 1px #fff,-1px -1px #fff,1px -1px #fff,-1px 1px #fff}
.timer{position:absolute;left:788px;top:4px;width:24px;height:24px;border-radius:50%;background:radial-gradient(circle at 50% 40%,#3da2f2,#1f86e8);box-shadow:0 0 0 1px #cfe6fb;color:#cfe4fa;font:400 6.500px/24px "Open Sans",sans-serif;text-align:center}

.dialog{position:absolute;left:165px;top:114px;width:430px;height:406px;background:#f0f0f0;box-shadow:0 1px 6px rgba(0,0,0,.45),0 0 14px rgba(0,0,0,.2);display:flex;flex-direction:column}
.dtitle{height:17px;background:#fff;display:flex;align-items:center;padding-left:4px;gap:3px;color:#666;flex:none}
.dtitle svg{width:8px;height:8px}
.dtitle em{margin-left:auto;margin-right:5px;font-size:11px;line-height:11px;color:#444}
.dbody{height:361px;display:flex;padding:12px 0 0 8px;flex:none}
.tree{width:120px;height:349px;background:#fff;border:1px solid #aaa;border-width:1px 1px 0 1px;border-left-color:#eee;border-top-color:#bbb;padding-top:.5px;flex:none;color:#555}
.t{height:10.660px;line-height:10.660px;padding-left:10px;position:relative;white-space:nowrap}
.t.h{padding-left:2px;font-weight:500;color:#333}
.t.sel{background:#cce8ff}
.t.a::before{content:"";position:absolute;left:4px;top:3.500px;width:3px;height:3px;border:solid #888;border-width:1px 1px 0 0;transform:rotate(45deg)}
.pane{width:277px;margin-left:11px;display:flex;flex-direction:column;color:#666}
.grp{display:flex;align-items:center;gap:2px;height:10px;color:#555}
.grp::after{content:"";flex:1;height:1px;background:#c8c8c8}
.g1{margin-top:1px}
.g2{margin-top:25px}
.g3{margin-top:6px}
.f{display:flex;align-items:center;padding-left:15px}
.f label{width:64px;flex:none;white-space:nowrap}
.select{width:149px;height:14.500px;background:#e0e0e0;border-bottom:1px solid #aaa;padding:0 5px 0 2px;line-height:14px;display:flex;justify-content:space-between;font-family:"Open Sans","Noto Sans CJK SC",sans-serif;color:#666}
.select b{font-weight:400;line-height:10px}
.inp{width:36px;height:14px;background:#fff;border:1px solid #888;border-width:1px 0 0 1px;box-shadow:inset -1px -1px 0 #ddd;padding-left:2px;line-height:12px;font-family:"Open Sans",sans-serif;color:#666}
.inp.wide{width:149px;font-family:inherit}
.u{margin-left:5px}
.f-sel{margin-top:7px}
.f-1{margin-top:6px}
.f-2{margin-top:4px}
.f-3{margin-top:5px}
.f-4{margin-top:3px}
.f-5{margin-top:2px}
.dis,.dis label{color:#aaa}
.dis .inp{background:#eee;border:1px solid #ddd;box-shadow:none;color:#999}
.radio{height:12.500px;line-height:12.500px;padding-left:15px;display:flex;align-items:center;gap:2px;flex:none}
.radio::before{content:"";width:7px;height:7px;border:1px solid #555;border-radius:50%;background:#fff}
.radio.on::before{background:radial-gradient(circle,#333 1.500px,#fff 2px)}
.radio.dis::before{border-color:#bbb;background:#f0f0f0}
.g3+.radio{margin-top:3px}
.dfoot{margin:0 8px 0 133px;padding-top:6px;border-top:1px solid #a8a8a8;display:flex;justify-content:flex-end;gap:5px}
.dbtn{width:45px;height:15px;background:#e1e1e1;border:1px solid #adadad;text-align:center;line-height:13px;color:#555}
.dbtn.def{border:1px solid #2a6fb0;box-shadow:inset 0 0 0 .5px #2a6fb0}
.grip{position:absolute;right:1px;bottom:1px;width:5px;height:5px;background:linear-gradient(135deg,transparent 50%,#bbb 50%)}
.cursor{position:absolute;left:386px;top:84px;width:8px;height:11px}
```
FILE: grid.js
```
(function () {
  var svg = document.getElementById('persp');
  var NS = 'http://www.w3.org/2000/svg';
  // origin and vanishing points, in viewport coordinates
  var ox = 215, oy = 98, rx = -595, ry = -132, gx = 476, gy = -132;
  var w1 = -0.332, w2 = 0.5536;
  function P(u, v) {
    var a = w1 * u, b = w2 * v, d = a + b + 1;
    return [(a * rx + b * gx + ox) / d, (a * ry + b * gy + oy) / d];
  }
  function line(p, q, color, width) {
    var l = document.createElementNS(NS, 'line');
    l.setAttribute('x1', p[0].toFixed(1));
    l.setAttribute('y1', p[1].toFixed(1));
    l.setAttribute('x2', q[0].toFixed(1));
    l.setAttribute('y2', q[1].toFixed(1));
    l.setAttribute('stroke', color);
    l.setAttribute('stroke-width', width);
    svg.appendChild(l);
  }
  var n = 100, major = 10, i, t, m, c, wd;
  for (i = 0; i <= n; i++) {
    t = -1 + 2 * i / n;
    m = i % major === 0;
    c = m ? '#858b94' : '#949ba4';
    wd = m ? 0.8 : 0.45;
    line(P(t, -1), P(t, 1), c, wd);
    line(P(-1, t), P(1, t), c, wd);
  }
  line(P(0, 0), P(0, 1), '#5f9464', 1.1);
  line(P(0, 0), P(1, 0), '#a4666c', 1.1);
})();
```
